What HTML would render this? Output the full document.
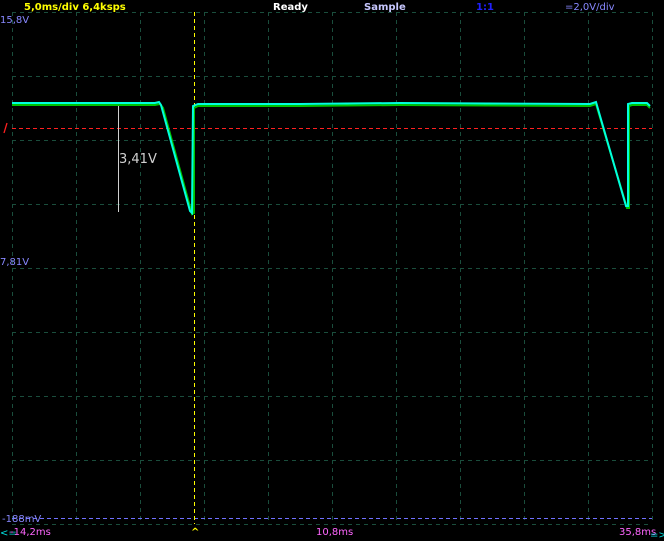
<!DOCTYPE html>
<html><head><style>
html,body{margin:0;padding:0;background:#000;width:664px;height:541px;overflow:hidden}
svg{display:block}
text{font-family:"DejaVu Sans","Liberation Sans",sans-serif}
</style></head><body>
<svg width="664" height="541" viewBox="0 0 664 541" xmlns="http://www.w3.org/2000/svg">
<rect width="664" height="541" fill="#000"/>
<g stroke="#1a4d3c" stroke-width="1" stroke-dasharray="4 4" fill="none">
<path d="M12.5 12V524M76.5 12V524M140.5 12V524M204.5 12V524M268.5 12V524M332.5 12V524M396.5 12V524M460.5 12V524M524.5 12V524M588.5 12V524M652.5 12V524"/>
<path d="M12 12.5H652M12 76.5H652M12 140.5H652M12 204.5H652M12 268.5H652M12 332.5H652M12 396.5H652M12 460.5H652M12 524.5H652"/>
</g>
<line x1="12" y1="128.5" x2="652" y2="128.5" stroke="#ff2020" stroke-dasharray="4 3"/>
<line x1="12" y1="518.5" x2="652" y2="518.5" stroke="#7070ff" stroke-dasharray="4 3"/>
<line x1="194.5" y1="12" x2="194.5" y2="524" stroke="#ffff00" stroke-dasharray="4 3"/>
<line x1="118.5" y1="104" x2="118.5" y2="212" stroke="#d0d0d0"/>
<text x="119" y="163" fill="#d0d0d0" font-size="13">3,41V</text>
<polyline fill="none" stroke="#00c000" stroke-width="2" points="12,105 118,105 125,105 155,105 160,104 163,108 192,214 194,213 194,108 198,106 300,106 400,105 590,106 596,104 627,208 629,208 629,106 632,105 647,105 650,108"/>
<polyline fill="none" stroke="#00ffdd" stroke-width="2" points="12,103 118,103 125,103 155,103 159,102 161,105 190,211 192,213 193,106 198,104 300,104 400,103 590,104 596,102 626,206 628,206 628,104 632,103 647,103 650,106"/>
<path d="M7 123L4 133" stroke="#ff2020" stroke-width="1.3"/>
<text x="24" y="10" fill="#ffff00" font-size="10" font-weight="bold">5,0ms/div  6,4ksps</text>
<text x="273" y="10" fill="#ffffff" font-size="10" font-weight="bold">Ready</text>
<text x="364" y="10" fill="#c8c8ff" font-size="10" font-weight="bold">Sample</text>
<text x="476" y="10" fill="#2020ff" font-size="10" font-weight="bold">1:1</text>
<text x="565" y="10" fill="#8888ff" font-size="10">=2,0V/div</text>
<text x="0" y="23" fill="#8888ff" font-size="10">15,8V</text>
<text x="0" y="265" fill="#8888ff" font-size="10">7,81V</text>
<text x="2" y="522" fill="#8888ff" font-size="10">-188mV</text>
<text x="0" y="536" fill="#00e0e0" font-size="10">&lt;=</text>
<text x="10" y="535" fill="#ff66ff" font-size="10">-14,2ms</text>
<text x="191" y="535" fill="#ffff00" font-size="10" font-weight="bold">^</text>
<text x="316" y="535" fill="#ff66ff" font-size="10">10,8ms</text>
<text x="619" y="535" fill="#ff66ff" font-size="10">35,8ms</text>
<text x="650" y="538" fill="#00e0e0" font-size="10">=&gt;</text>
</svg>
</body></html>
